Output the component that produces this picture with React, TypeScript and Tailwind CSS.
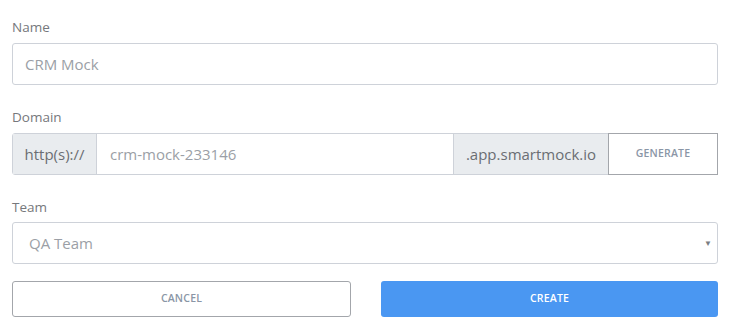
import React from 'react';

const App: React.FC = () => {
  return (
    <div className="w-[730px] h-[329px] bg-white px-3 pt-[18px] font-['Open_Sans',sans-serif]">
      <div>
        <label className="block text-[13.5px] text-[#76787c] leading-[18px]">Name</label>
        <div className="mt-[7px] h-[42px] border border-[#ced2d9] rounded-[3px] flex items-center px-3">
          <span className="text-[15px] text-[#9b9fa6]">CRM Mock</span>
        </div>
      </div>

      <div className="mt-[23px]">
        <label className="block text-[13.5px] text-[#76787c] leading-[18px]">Domain</label>
        <div className="mt-[7px] h-[42px] flex border border-[#ced2d9] rounded-l-[3px]">
          <div className="w-[84px] bg-[#e9ecef] border-r border-[#ced2d9] flex items-center justify-center text-[15px] text-[#6b6e73]">
            http(s)://
          </div>
          <div className="flex-1 flex items-center px-[13px] text-[15px] text-[#9b9fa6]">crm-mock-233146</div>
          <div className="w-[155px] bg-[#e9ecef] border-l border-[#ced2d9] flex items-center justify-center text-[15px] text-[#6b6e73]">
            .app.smartmock.io
          </div>
          <button className="w-[110px] -my-px -mr-px border border-[#a3a6ab] bg-white text-[10.5px] font-semibold text-[#8a96a6] tracking-[0.2px]">
            GENERATE
          </button>
        </div>
      </div>

      <div className="mt-[23px]">
        <label className="block text-[13.5px] text-[#76787c] leading-[18px]">Team</label>
        <div className="mt-[6px] h-[42px] border border-[#ced2d9] rounded-[3px] flex items-center justify-between pl-[16px] pr-[5px]">
          <span className="text-[15px] text-[#9b9fa6]">QA Team</span>
          <span className="text-[8px] text-[#7a7d82]">▼</span>
        </div>
      </div>

      <div className="mt-[17px] flex gap-[30px]">
        <button className="flex-1 h-[36px] border border-[#a3a6ab] rounded-[3px] bg-white text-[10.5px] font-semibold text-[#8a96a6] tracking-[0.2px]">
          CANCEL
        </button>
        <button className="flex-1 h-[36px] rounded-[3px] bg-[#4a97f2] text-[10.5px] font-semibold text-white tracking-[0.2px]">
          CREATE
        </button>
      </div>
    </div>
  );
};

export default App;
